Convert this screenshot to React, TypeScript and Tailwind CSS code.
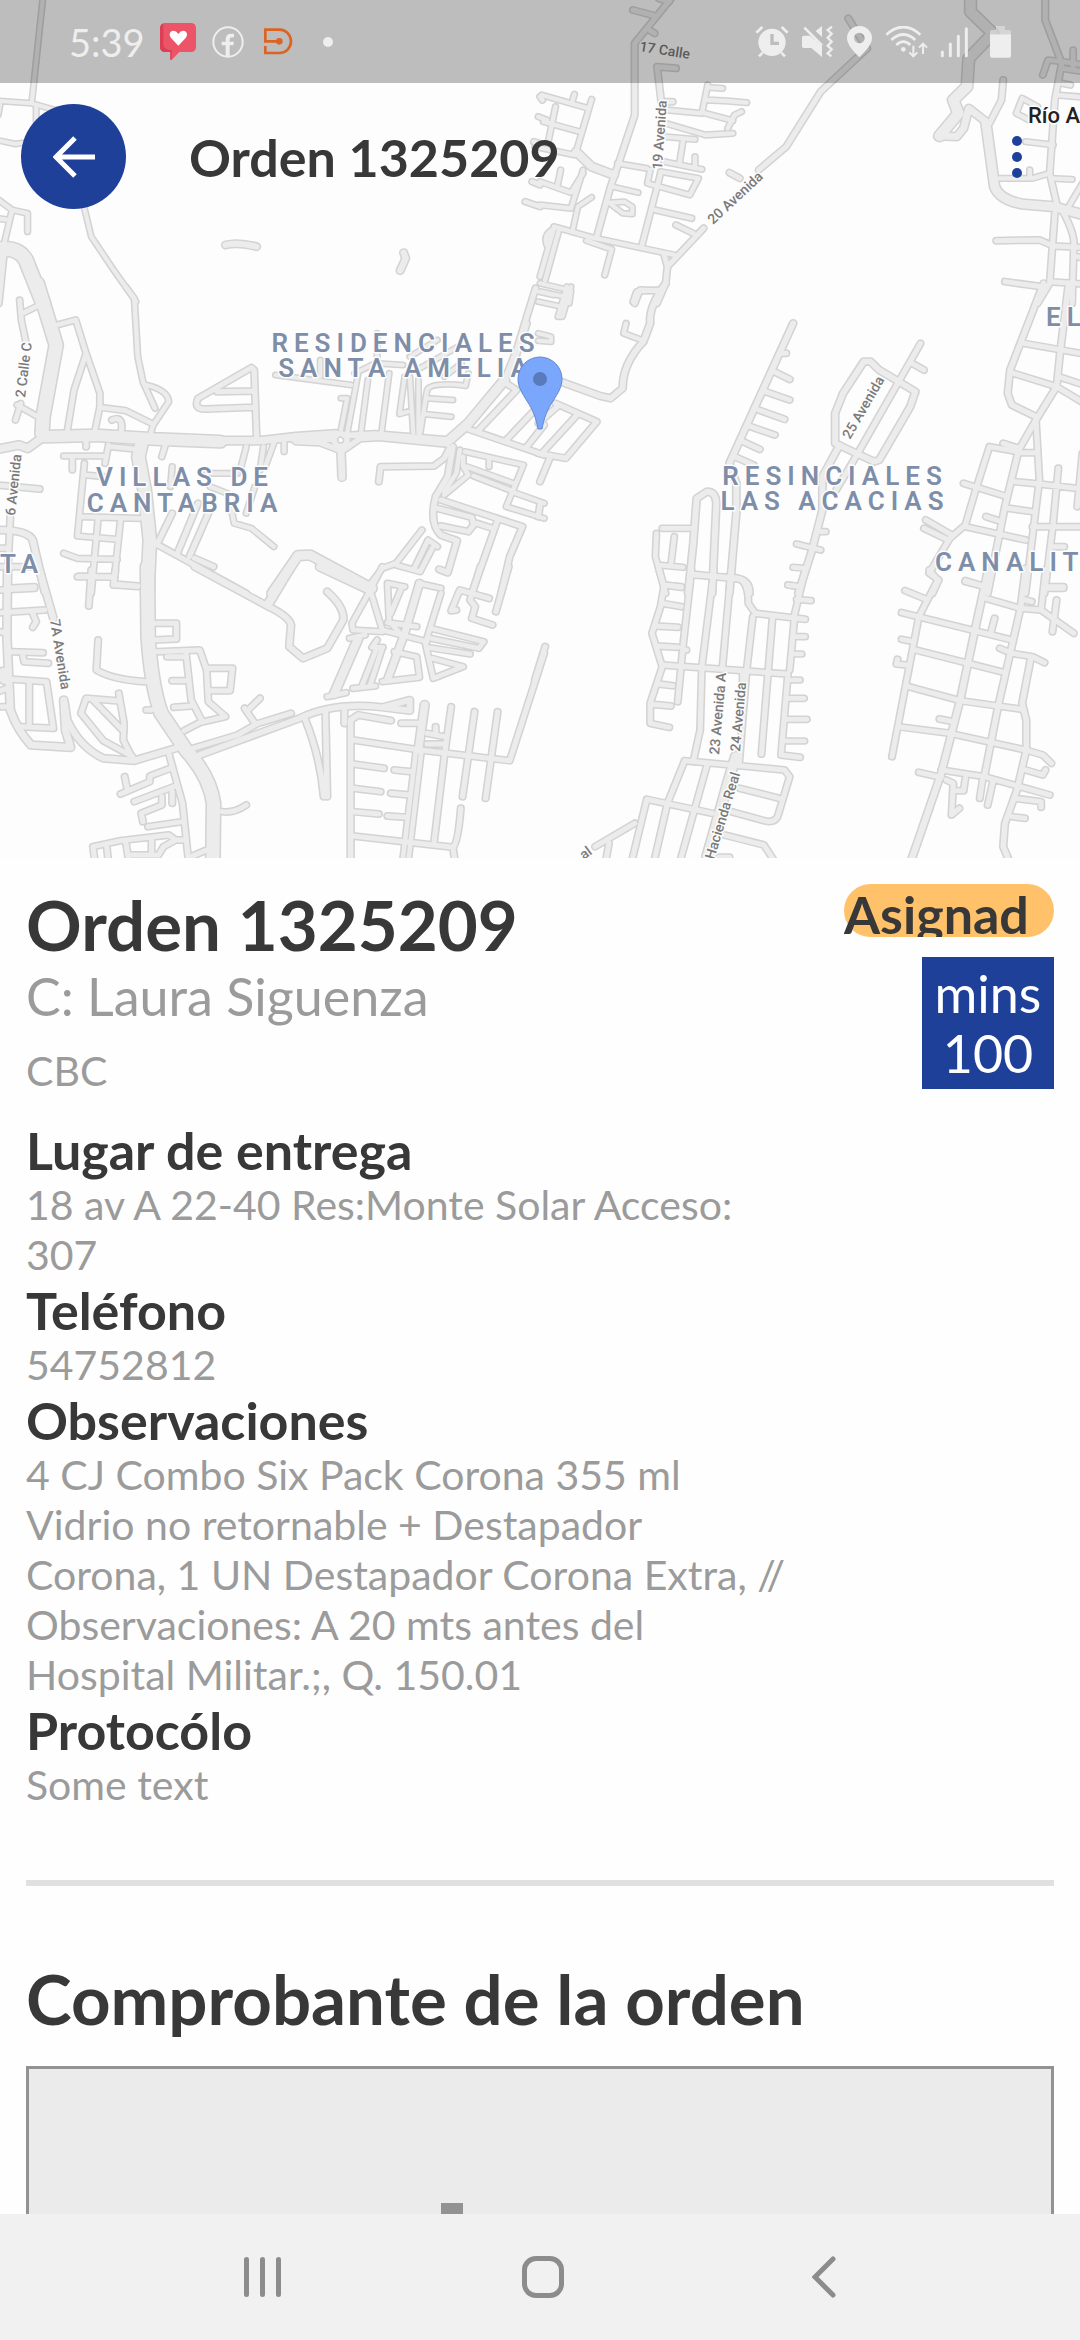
type Road = [width: number, d: string];
type Tile = { x: number; y: number; roads: Road[] };

const tiles: Tile[] = [
  {
    x: 0,
    y: 0,
    roads: [
      [12, 'M125 -10 L92 310 M-10 302 L92 310 L160 330 M105 322 V365 M0 315 L-5 345 M-10 420 L45 432 L70 428'],
      [13, 'M-10 595 L35 630 L80 640 V695 M-10 655 L25 660 M35 630 L10 740'],
      [12, 'M245 625 L265 710 L330 810 L395 905'],
      [40, 'M-20 750 Q50 735 75 780 L125 910'],
      [18, 'M-5 910 L10 760'],
      [18, 'M655 735 Q690 725 745 740 M1172 758 L1178 775 L1162 812'],
      [14, 'M1550 425 L1568 430 M1545 545 L1568 555 M1525 605 L1568 620 M1568 290 L1575 300'],
    ],
  },
  {
    x: 540,
    y: 0,
    roads: [
      [15, 'M385 -10 L330 60 L275 130 V345 L225 500 L205 560 L165 710'],
      [15, 'M270 30 L335 48 M345 -5 L375 5 M310 85 L333 100 M395 205 L340 200 L352 305 L385 305'],
      [13, 'M5 285 L140 325 M100 283 L92 310 M150 298 L105 455 M45 320 L25 420 M10 365 L115 395 M-15 440 L100 465 M-5 350 L20 360'],
      [22, 'M105 455 L150 500 L215 525'],
      [13, 'M125 510 L90 625 L0 615 M0 545 L90 578 L125 520 M60 510 L50 560'],
      [13, 'M225 490 L310 505 M320 510 L312 550 L435 585 L460 535 L350 515 M360 485 L470 508 M450 470 V500 M415 425 L405 490 M360 410 L450 418'],
      [13, 'M365 370 L480 405 L560 400 M545 385 L565 345 L585 335 M370 330 L470 340 L487 255 M487 262 L530 265 M487 300 L545 303 L600 308 M480 340 L560 362'],
      [14, 'M350 520 L295 740 M335 630 L440 655 M395 675 L445 700'],
      [12, 'M210 560 L285 578 M150 592 L110 620 L95 690 M200 608 L245 605 L268 620 V642 L240 640 L205 612'],
      [13, 'M40 680 L150 712 L390 765 M55 690 L15 840 M40 685 L0 830 M35 690 Q10 705 20 735 M135 722 L208 748 L188 825'],
      [12, 'M0 850 L90 872 L85 910 M5 875 L70 890'],
      [15, 'M895 55 L950 145 L815 275 L715 440 L635 510 M550 518 L580 535 M475 685 L370 800 L365 850 L340 910 M275 910 L290 870 L345 872 M360 762 L370 800'],
      [30, 'M1250 -10 V35 L1315 100 L1245 175 L1240 260 L1200 300 L1215 340 L1160 408'],
      [20, 'M1160 408 L1210 410 L1230 385 L1245 325 L1295 365'],
      [26, 'M1295 370 L1320 560 Q1335 600 1400 612 L1490 620 L1580 645'],
      [15, 'M1345 240 L1340 300 L1305 370 M1467 -5 V60 L1515 190 L1495 300 L1480 520 L1500 610'],
      [14, 'M1460 225 L1475 180 L1520 185 L1580 195 M1548 150 V200 M1515 205 L1580 215 M1515 250 L1540 255 M1500 285 L1580 292'],
      [13, 'M1400 295 L1383 340 L1420 360 M1400 295 L1445 320 M1410 425 L1490 435 M1335 535 H1430 L1480 520 M1422 510 V530 M1485 535 L1545 538 M1575 550 L1535 620'],
      [15, 'M1495 640 L1480 850 L1445 910 M1510 620 Q1555 700 1550 740 L1545 910 M1325 722 L1450 720 L1490 738 L1580 742 M1350 845 L1470 862 M1480 845 L1580 852 M1560 770 L1580 775'],
    ],
  },
  {
    x: 0,
    y: 290,
    roads: [
      [38, 'M108 -20 L163 165 L125 380 L122 430'],
      [34, 'M128 440 L280 436 L450 447 L640 455'],
      [22, 'M640 452 L760 452 L860 440 L975 432'],
      [16, 'M1000 436 L1090 432 L1300 450 M860 455 L930 458 L985 480 M1000 478 L1045 446 L1100 442 L1300 462 M850 448 H960'],
      [16, 'M970 450 a18 18 0 1 0 38 0 a18 18 0 1 0 -38 0'],
      [20, 'M990 480 L993 562'],
      [22, 'M120 445 L80 475 L55 465 L-10 478'],
      [36, 'M410 465 L402 500 L420 600 L435 750 L428 910'],
      [14, 'M57 30 L62 90 L75 155 M65 70 L105 50 M-5 -10 V40 M60 340 L45 390 M50 345 L110 380'],
      [14, 'M165 105 L220 90 L250 190 L290 310 V350 L275 425 M250 190 L215 300 L195 425 M290 352 L365 362 L440 400'],
      [13, 'M436 435 L445 405 L490 335 Q487 300 425 285'],
      [13, 'M365 -10 L390 25 L400 200 L415 275 L450 355'],
      [15, 'M352 425 Q360 375 325 390 M250 445 V470 M745 440 L738 240 L730 233 L575 325 Q560 360 600 357 L735 352 M630 305 L735 303'],
      [26, 'M1305 450 L1360 400 L1465 270'],
      [15, 'M1465 270 L1500 180 L1555 -5 M1485 240 L1530 100'],
      [12, 'M800 255 L1020 285 M990 325 H1008 L990 420 M1040 250 L1008 430 M1068 270 L1048 430 M1130 250 L1108 425 M1030 250 L1090 220 L1170 225 M1175 260 L1160 372 L1195 362 M1190 260 L1200 430 M1215 270 V430 M1220 430 L1240 300 Q1250 275 1352 287 L1360 250 M1240 325 L1315 330 M1230 372 L1310 380'],
      [12, 'M1095 130 V200 M1190 200 L1270 150 M1210 240 L1330 170 M930 210 V260 M1290 260 L1340 220'],
      [15, 'M1345 412 L1580 495 M1390 420 L1500 300 L1470 280 M1470 450 L1580 330 M1530 470 L1580 405'],
      [15, 'M1305 475 L1290 505 L1260 528 L1105 530 L1100 575'],
      [16, 'M1315 470 L1300 560 L1265 620 Q1245 700 1280 735 L1327 752 L1300 848 L1275 838'],
      [13, 'M1335 480 L1325 550 L1290 605 M1350 485 L1520 525 L1470 650 L1580 685 M1355 530 L1490 580 M1345 500 V530 L1360 555 L1290 615 M1420 505 V530 M1485 605 L1580 640 M1375 558 L1480 600'],
      [15, 'M1280 630 L1517 710 L1480 800 L1455 910 M1445 690 L1370 910 M1270 655 L1370 682 L1375 705 L1360 725 L1280 708 M1385 700 L1430 715'],
      [14, 'M1225 720 L1150 820 L1110 835 L1070 890 M1270 770 L1243 750 L1205 830 M1255 775 L1220 845 L1150 825'],
      [26, 'M790 910 L865 797 L900 795 L1080 895'],
      [18, 'M-5 720 Q80 720 95 750 L130 905'],
      [15, 'M30 680 L20 905 M-5 585 L115 597 M-5 775 H25 M0 830 H90 M20 895 L100 890'],
      [14, 'M185 498 H305 M210 500 V540 M315 465 L305 520 M320 470 L400 478 M480 465 L470 500 M245 520 L225 738 L340 748 M250 555 L300 560 M235 680 L405 685 M285 685 L265 910 M350 690 L330 885 L400 890 M185 790 L225 805 L340 808 M230 858 L330 862'],
      [15, 'M455 765 L500 670 M515 790 L575 640 M550 800 L605 670 M565 805 L620 830 M450 760 L715 910'],
      [13, 'M715 470 L700 530 M765 470 L755 540 M795 460 L770 530 M825 455 V485 M600 550 H690 M610 590 L660 610 M670 650 L680 700 L730 715 L795 770 M740 590 L715 670 M500 530 L495 590'],
    ],
  },
  {
    x: 540,
    y: 290,
    roads: [
      [12, 'M90 -10 L65 80 L52 80 L78 -10 M-5 35 L72 52 M-5 130 L32 140 V155 L-5 152 M-5 5 L40 15'],
      [17, 'M365 -20 Q315 50 320 100 L300 155 Q240 220 240 295 L205 325 L175 318 L60 275'],
      [13, 'M250 100 L243 130 L295 150 M270 35 L280 5 L345 0'],
      [15, 'M-5 490 L75 505 L165 395 L45 340 M-5 400 L50 350 M10 485 L110 372 M30 500 L0 575 M0 645 L-5 680'],
      [17, 'M735 100 L550 520 L570 580'],
      [15, 'M700 190 H715 M680 245 L725 268 M655 305 L725 330 M635 360 L710 388 M612 410 L682 435 M590 455 L638 478 M565 500 L620 525'],
      [17, 'M570 580 V670 L550 910'],
      [17, 'M500 910 L512 640 Q510 605 485 605 L455 625 L445 760 L430 910'],
      [14, 'M355 715 H445 M338 730 L335 800 L365 910 M390 740 L380 825 M345 825 L415 832 M435 855 L560 862 Q610 865 610 910 M360 885 L410 890'],
      [15, 'M1105 160 L920 495 L860 600 M1080 220 L1115 240'],
      [17, 'M985 240 L960 215 L940 215 L880 310 L857 370 V460 L970 515 L985 510 L1030 430 L1075 350 L1090 305 L985 240'],
      [17, 'M870 465 L820 560 V660 L790 780 L750 910'],
      [14, 'M815 725 H830 M745 762 L815 780 M735 832 L770 835 M720 885 L755 890'],
      [16, 'M1462 -20 L1365 240 L1358 310 L1370 345 L1440 380 M1535 -20 L1510 190 L1500 290 L1440 390 L1390 480 L1350 650 L1300 910'],
      [15, 'M1405 160 L1580 192 M1375 250 L1500 290 L1580 340 M1505 260 L1580 285 M1440 390 L1450 570 L1410 910'],
      [15, 'M1345 460 L1390 475 M1390 488 H1440 M1385 485 L1305 470 L1265 600 L1235 705 L1190 745 L1130 850 L1158 870 L1140 910'],
      [15, 'M1230 580 L1350 618 M1380 575 L1450 582 L1580 598 M1505 535 L1490 700 L1465 910 M1575 490 L1560 650 M1360 655 L1430 665 M1295 680 L1340 695 M1235 710 L1410 750 M1430 710 H1580 M1120 690 L1195 735 M1115 715 L1185 750 M1490 770 H1522 M1235 875 L1295 890 M1470 890 H1520'],
    ],
  },
  {
    x: 0,
    y: 570,
    roads: [
      [20, 'M22 -5 L20 200 L30 420 Q50 480 90 525 L205 532 L190 480 L185 390'],
      [34, 'M12 310 L15 325'],
      [18, 'M115 0 L155 145'],
      [15, 'M0 60 L100 55 M0 128 L130 120 M95 130 L105 155 L95 172 M-5 185 L20 188 M35 245 L125 248 M65 250 L70 275 L140 280 M35 328 L135 335 L155 475 L60 470 M85 335 V465 M-5 365 L20 355 M5 410 H25'],
      [18, 'M188 400 L195 450 Q230 530 300 565 L390 572 L510 535'],
      [15, 'M385 565 L358 510 L360 460 L345 370 M345 393 L250 385 L235 430 L300 512 L385 560 M270 390 L360 485 M285 210 L280 300 Q330 330 425 335'],
      [38, 'M428 -10 L430 200 Q440 350 468 430 L540 540 Q610 620 620 700 L618 880'],
      [15, 'M225 20 H330 L332 42 L400 48 M265 0 L258 108 M335 0 L330 45 M445 160 H512 V207 L445 210 M455 245 L580 240 L600 300 L605 395 L655 440 L580 458 L535 482 M600 295 H675 L668 362 H605 M540 250 L555 390 L585 450 M485 260 H530 M500 332 H545 M505 412 L555 408 M425 420 H440'],
      [17, 'M565 -10 L780 110 Q840 140 845 165 L840 230 L880 265 L950 235 L997 150 Q1000 110 950 65'],
      [24, 'M850 -20 L780 100 M930 -10 L1075 60'],
      [15, 'M560 535 L690 495 L745 462 L845 430 M740 460 L710 415 M720 420 L755 385'],
      [17, 'M580 555 L870 445 Q970 395 1110 412 L1190 390 V422 L1110 412'],
      [16, 'M885 445 Q930 560 940 680 M945 425 L950 680 M1000 410 V460 M1018 880 V450 L1040 435 L1135 452'],
      [15, 'M490 550 L530 700 L548 880 M495 595 L435 618 V635 L350 672 M362 620 L370 660 M505 650 L390 695 M500 665 V700 M470 680 V705 L410 730 L415 755 M430 770 L530 755 M275 870 L270 830 L350 812 L490 795 L510 810 H540 M310 830 L315 880 M365 815 L372 860 M380 855 H460 L475 830 L510 810 M440 805 V850 M555 860 L600 840 M645 725 Q680 730 715 705'],
      [14, 'M1110 -10 L1075 60 L1022 160 L1025 180 L1110 185 M1075 60 L1110 180 L1240 215'],
      [24, 'M1040 205 L970 372'],
      [14, 'M1015 205 L1060 195 M950 380 L1005 368 M1095 210 L1080 232 H1112 M1092 240 L1050 350 M1108 240 L1075 345 M1025 355 L1090 348'],
      [20, 'M1218 40 L1175 190 L1125 330'],
      [14, 'M1110 335 L1218 322 L1210 260 L1145 245 M1175 50 L1125 40 L1130 150 M1165 55 L1135 130 M1125 158 L1210 170 M1215 40 L1280 55 M1280 70 L1235 220 L1258 325 L1345 290 L1255 265 M1250 175 L1405 215 L1390 235 L1250 205 M1240 232 L1365 252 M1140 165 L1170 200'],
      [15, 'M1395 -10 L1365 90 L1380 110 L1370 145 L1430 165 M1477 -10 L1440 125 M1325 120 L1310 122 L1335 60 L1420 85'],
      [15, 'M1580 250 L1480 572 L1220 540 L1025 510'],
      [22, 'M1233 405 L1215 540'],
      [13, 'M1208 540 L1168 880 M1224 540 L1185 880'],
      [15, 'M1310 410 L1290 560 L1260 820 M1378 425 L1343 680 M1445 425 L1410 685 M1165 460 H1220 M1240 490 L1290 500 M1265 470 V490 M1240 522 H1290 M1025 582 L1115 595 M1145 600 L1195 605 M1025 655 L1105 665 M1135 670 L1190 675 M1025 725 L1100 732 M1125 738 L1180 742 M1025 798 L1315 832 Q1330 820 1338 715 M1315 832 L1322 880'],
    ],
  },
  {
    x: 540,
    y: 570,
    roads: [
      [15, 'M15 230 L-15 330 M345 -5 L360 50 L350 110 L325 190 L355 290 L320 400 V460 L375 472 M360 45 L410 52 M355 100 L410 110 M335 168 L400 172 M340 228 L400 232 M440 0 L415 230 L400 395 M415 240 H425 M345 342 L385 347 M325 403 L380 408'],
      [15, 'M355 285 L530 298 L720 312 M505 0 L470 290 L465 480 L445 575 M440 12 L580 28 Q605 40 605 100 L625 130 L770 148 M555 0 L530 290 M618 140 L600 300 L578 585 M675 145 L643 552 M770 0 L740 130 L725 300 M720 312 L700 555 L755 562'],
      [14, 'M720 45 L755 50 M745 88 L787 92 M740 200 H770 M738 252 H760 M728 330 H755 M720 385 H767 M715 448 H775 M710 513 H768 M588 305 V345'],
      [15, 'M420 572 L710 600 L725 620 L690 740 Q680 760 650 752 L555 725 M420 572 L370 700 L330 880 M485 585 L405 880 M310 688 L500 730 M310 688 L265 880 M275 760 L160 830 M200 820 L190 880 M580 655 L695 685 M535 795 L650 825 L685 880 M520 862 H550'],
      [26, 'M568 560 L545 640 L485 860'],
      [15, 'M1130 0 L1155 30 L1100 140 L1022 560 M1060 62 L1115 85 M1050 128 L1370 210 M1050 208 L1085 215 M1065 285 L1035 282 L1038 268 M1235 32 L1285 48'],
      [18, 'M1302 -5 L1265 170 L1220 390 L1165 610 L1075 880'],
      [16, 'M1410 -5 L1395 115 L1330 410 L1290 620 M1425 265 L1400 400 L1412 450 V540 L1385 660 L1350 760 L1345 830 L1365 880'],
      [15, 'M1295 85 L1395 115 L1455 120 L1550 190 M1410 90 L1428 95 M1468 0 L1455 120 M1470 55 H1520 M1500 90 L1488 185 M1320 145 L1310 185 M1090 240 L1350 308 M1335 235 L1370 250 L1430 260 L1465 278 M1070 350 L1220 392 L1400 418 M1160 447 L1200 455 M1040 470 L1190 490 L1410 540 L1460 555 L1485 580'],
      [15, 'M1100 607 L1165 622 M1165 600 L1290 620 L1480 675 M1410 600 L1460 615 L1468 600 M1380 685 L1455 695 V712 M1370 740 L1408 745 M1235 625 L1230 662 H1210 M1180 630 L1200 640 L1195 735 L1218 715 M1285 630 L1277 685 M1315 635 L1300 705'],
    ],
  },
];

const districts: { x: number; y: number; text: string; anchor?: 'start' | 'middle' | 'end' }[] = [
  { x: 406, y: 352, text: 'RESIDENCIALES' },
  { x: 406, y: 377, text: 'SANTA AMELIA' },
  { x: 185, y: 486, text: 'VILLAS DE' },
  { x: 185, y: 512, text: 'CANTABRIA' },
  { x: 835, y: 485, text: 'RESINCIALES' },
  { x: 835, y: 510, text: 'LAS ACACIAS' },
  { x: 44, y: 573, text: 'TA', anchor: 'end' },
  { x: 1046, y: 326, text: 'EL', anchor: 'start' },
  { x: 935, y: 571, text: 'CANALIT', anchor: 'start' },
];

const streets = [
  { x: 639, y: 51, angle: 9, text: '17 Calle' },
  { x: 662, y: 170, angle: -86, text: '19 Avenida' },
  { x: 713, y: 225, angle: -43, text: '20 Avenida' },
  { x: 25, y: 398, angle: -83, text: '2 Calle C' },
  { x: 15, y: 516, angle: -84, text: '6 Avenida' },
  { x: 850, y: 440, angle: -60, text: '25 Avenida' },
  { x: 50, y: 620, angle: 81, text: '7A Avenida' },
  { x: 719, y: 755, angle: -85, text: '23 Avenida A' },
  { x: 740, y: 752, angle: -85, text: '24 Avenida' },
  { x: 714, y: 860, angle: -73, text: 'Hacienda Real' },
  { x: 584, y: 860, angle: -37, text: 'al' },
];

function RoadLayer({ casing }: { casing: boolean }) {
  return (
    <g fill="none" stroke={casing ? '#d3d3d3' : '#ececec'} strokeLinecap="round" strokeLinejoin="round">
      {tiles.map((tile, i) => (
        <g key={i} transform={`translate(${tile.x} ${tile.y}) scale(0.3444 0.3333)`}>
          {tile.roads.map(([width, d], j) => (
            <path key={j} d={d} strokeWidth={casing ? width + 9 : width} />
          ))}
        </g>
      ))}
    </g>
  );
}

function OrderMap() {
  return (
    <svg
      viewBox="0 0 1080 858"
      className="block w-full bg-[#fdfdfd] font-[Roboto,sans-serif]"
      role="img"
      aria-label="Mapa de la entrega"
    >
      <RoadLayer casing />
      <RoadLayer casing={false} />
      <g stroke="#fdfdfd" strokeWidth="3" strokeLinejoin="round" paintOrder="stroke" fontWeight="500">
        {streets.map((s) => (
          <text key={s.text} fontSize="14" fill="#7a7a7a" transform={`translate(${s.x} ${s.y}) rotate(${s.angle})`}>
            {s.text}
          </text>
        ))}
        {districts.map((d) => (
          <text
            key={d.text}
            x={d.x}
            y={d.y}
            fontSize="26"
            fontWeight="600"
            letterSpacing="6"
            textAnchor={d.anchor ?? 'middle'}
            fill="#7e8ea9"
          >
            {d.text}
          </text>
        ))}
        <text x="1028" y="123" fontSize="22" fill="#222222">
          Río A
        </text>
      </g>
      <path
        d="M540 357 a22 22 0 0 1 22 22 c0 8 -4 14 -9 22 c-6 9 -9 17 -11 28 h-4 c-2 -11 -5 -19 -11 -28 c-5 -8 -9 -14 -9 -22 a22 22 0 0 1 22 -22 z"
        fill="#7aa7fc"
        stroke="#6288d0"
      />
      <circle cx="540" cy="379" r="7" fill="#5a7bbb" />
    </svg>
  );
}

function StatusBar() {
  return (
    <div className="flex h-[83px] items-center justify-between bg-black/25 pr-[68px] pl-[69px] text-[#eeeeee]">
      <div className="flex items-center">
        <span className="w-[91px] text-[38px] leading-[50px]">5:39</span>
        <svg viewBox="0 0 108 112" className="w-9">
          <path d="M16 0 H92 Q108 0 108 16 V72 Q108 87 92 87 H58 L34 112 Q31 112 31 108 V87 H16 Q0 87 0 72 V16 Q0 0 16 0 Z" fill="#ed5468" />
          <path d="M10 2 Q0 6 0 16 V72 Q0 87 16 87 H31 V108 Q31 112 34 112 L36 82 Q12 80 10 66 Z" fill="#da3f55" />
          <path d="M55 68 L33 45 Q24 33 34 25 Q46 20 55 33 Q64 20 76 25 Q86 33 77 45 Z" fill="#ffffff" />
        </svg>
        <svg viewBox="0 0 96 96" className="ml-4 w-8">
          <circle cx="48" cy="48" r="44" fill="none" stroke="currentColor" strokeWidth="6" />
          <path d="M41 92 V58 H29 V47 H41 V40 Q41 23 58 23 H66 V34 H60 Q53 34 53 41 V47 H66 L64 58 H53 V92 Z" fill="currentColor" />
        </svg>
        <svg viewBox="0 0 87 80" className="ml-5 w-[29px]" fill="none" stroke="#dc6420" strokeWidth="8">
          <path d="M45 40 H4 V5 H47 A34 35 0 0 1 47 75 H4 V54" />
          <circle cx="46" cy="40" r="6" fill="#dc6420" />
        </svg>
        <span className="ml-[30px] size-[10px] rounded-full bg-[#eeeeee]" />
      </div>
      <div className="flex items-center gap-3">
        <svg viewBox="15 45 102 96" className="h-8" fill="none" stroke="currentColor" strokeWidth="7">
          <path d="M19 65 L37 48 M95 48 L113 65 M38 125 L27 136 M94 125 L105 136" strokeWidth="8" />
          <circle cx="66" cy="94" r="41" fill="currentColor" stroke="none" />
          <path d="M66 69 V97 H87" stroke="#bdbdbd" strokeWidth="10" />
        </svg>
        <svg viewBox="150 45 99 96" className="h-8" fill="currentColor">
          <path d="M158 74 H177 L213 106 V138 L181 111 H158 Q153 111 153 106 V79 Q153 74 158 74 Z M194 60 L213 45 V78 Z" />
          <path d="M160 50 L213 103" stroke="currentColor" strokeWidth="8" />
          <path d="M243 47 L230 57 L242 68 L230 80 L242 92 L230 104 L242 115 L230 127 L241 136" fill="none" stroke="currentColor" strokeWidth="7" />
        </svg>
        <svg viewBox="291 45 81 96" className="h-8" fill="currentColor" fillRule="evenodd">
          <path d="M331 45 A37 37 0 0 1 369 82 C369 100 350 120 331 139 C312 120 294 100 294 82 A37 37 0 0 1 331 45 Z M331 65 A16 16 0 1 0 331 97 A16 16 0 1 0 331 65 Z" />
        </svg>
        <svg viewBox="411 45 129 96" className="h-8" fill="none" stroke="currentColor" strokeWidth="8">
          <path d="M415 71 Q466 25 517 71 M430 87 Q466 54 502 87 M445 102 Q466 82 487 102" />
          <circle cx="466" cy="115" r="7" fill="currentColor" stroke="none" />
          <path d="M496 104 V132 M484 124 L496 136 L508 124 M525 129 V100 M513 110 L525 98 L537 110" strokeWidth="6" />
        </svg>
        <svg viewBox="570 45 87 96" className="h-8" stroke="currentColor" strokeWidth="9" strokeLinecap="round">
          <path d="M577 123 V134 M601 99 V134 M625 76 V134 M649 53 V134" />
        </svg>
        <svg viewBox="717 45 69 96" className="ml-2 h-8" fill="currentColor">
          <path d="M738 57 V45 H765 V57 H778 Q783 57 783 62 V70 H720 V62 Q720 57 725 57 Z" opacity=".5" />
          <path d="M720 70 H783 V134 Q783 140 777 140 H726 Q720 140 720 134 Z" />
        </svg>
      </div>
    </div>
  );
}

function AppHeader() {
  return (
    <header className="absolute inset-x-0 top-0">
      <StatusBar />
      <div className="flex items-center justify-between pt-[21px] pr-[35px] pl-[21px]">
        <div className="flex items-center gap-[63px]">
          <button type="button" aria-label="Volver" className="grid size-[105px] place-items-center rounded-full bg-[#1f4099]">
            <svg viewBox="0 0 42 42" className="size-[42px]" fill="none" stroke="#ffffff" strokeWidth="5">
              <path d="M42 21 H4 M22 2 L3 21 L22 40" />
            </svg>
          </button>
          <h2 className="text-[52px] leading-[60px] font-bold">Orden 1325209</h2>
        </div>
        <button type="button" aria-label="Más opciones" className="flex flex-col items-center gap-[6px] px-[23px] py-4">
          <span className="size-[10px] rounded-full bg-[#1f4099]" />
          <span className="size-[10px] rounded-full bg-[#1f4099]" />
          <span className="size-[10px] rounded-full bg-[#1f4099]" />
        </button>
      </div>
    </header>
  );
}

const details = [
  { title: 'Lugar de entrega', text: '18 av A 22-40 Res:Monte Solar Acceso: 307' },
  { title: 'Teléfono', text: '54752812' },
  {
    title: 'Observaciones',
    text: '4 CJ Combo Six Pack Corona 355 ml Vidrio no retornable + Destapador Corona, 1 UN Destapador Corona Extra, // Observaciones: A 20 mts antes del Hospital Militar.;, Q. 150.01',
  },
  { title: 'Protocólo', text: 'Some text' },
];

export default function App() {
  return (
    <div className="flex h-screen flex-col bg-[#fefefe] font-[Lato,sans-serif] text-[#383838]">
      <main className="relative min-h-0 flex-1 overflow-y-auto [scrollbar-width:none]">
        <OrderMap />
        <AppHeader />

        <div className="px-[26px] pt-[26px] pb-10">
          <div className="flex items-start justify-between">
            <div>
              <h1 className="text-[69px] leading-[82px] font-bold">Orden 1325209</h1>
              <p className="text-[52px] leading-[60px] text-[#9b9b9b]">C: Laura Siguenza</p>
              <p className="mt-5 text-[41px] leading-[50px] text-[#9b9b9b]">CBC</p>
            </div>
            <div className="flex flex-col items-end gap-5">
              <div className="h-[53px] w-[210px] overflow-hidden">
                <div className="h-full rounded-full bg-[#ffc26b] text-[52px] leading-[60px] font-bold">Asignad</div>
              </div>
              <div className="size-[132px] bg-[#1f4099] py-[6px] text-center text-[52px] leading-[60px] text-white">
                <div>mins</div>
                <div>100</div>
              </div>
            </div>
          </div>

          <dl className="mt-6 max-w-[760px]">
            {details.map((item) => (
              <div key={item.title}>
                <dt className="text-[52px] leading-[60px] font-bold">{item.title}</dt>
                <dd className="text-[41px] leading-[50px] text-[#9b9b9b]">{item.text}</dd>
              </div>
            ))}
          </dl>

          <hr className="mt-[70px] border-t-[6px] border-[#e0e0e0]" />

          <h2 className="mt-[72px] text-[69px] leading-[82px] font-bold">Comprobante de la orden</h2>
          <button
            type="button"
            aria-label="Agregar foto del comprobante"
            className="mt-[26px] grid h-[516px] w-full place-items-center border-[3px] border-[#929292] bg-[#ebebeb]"
          >
            <svg viewBox="0 0 24 24" className="size-[264px]" fill="#929292">
              <path d="M3 4V1h2v3h3v2H5v3H3V6H0V4h3zm3 6V7h3V4h7l1.83 2H21c1.1 0 2 .9 2 2v12c0 1.1-.9 2-2 2H5c-1.1 0-2-.9-2-2V10h3zm7 9c2.76 0 5-2.24 5-5s-2.24-5-5-5-5 2.24-5 5 2.24 5 5 5zm-3.2-5c0 1.77 1.43 3.2 3.2 3.2s3.2-1.43 3.2-3.2-1.43-3.2-3.2-3.2-3.2 1.43-3.2 3.2z" />
            </svg>
          </button>
        </div>
      </main>

      <nav className="flex h-[126px] shrink-0 items-center justify-center bg-[#f1f1f1] pl-[6px] text-[#8c8c8c]">
        <button type="button" aria-label="Recientes" className="flex h-full w-[281px] items-center justify-center gap-[11px]">
          <span className="h-10 w-[5px] rounded-full bg-[#8c8c8c]" />
          <span className="h-10 w-[5px] rounded-full bg-[#8c8c8c]" />
          <span className="h-10 w-[5px] rounded-full bg-[#8c8c8c]" />
        </button>
        <button type="button" aria-label="Inicio" className="grid h-full w-[281px] place-items-center">
          <span className="size-[42px] rounded-[14px] border-[5px] border-[#8c8c8c]" />
        </button>
        <button type="button" aria-label="Atrás" className="grid h-full w-[281px] place-items-center">
          <svg viewBox="0 0 24 42" className="h-[42px]" fill="none" stroke="currentColor" strokeWidth="5" strokeLinecap="round">
            <path d="M21 3 L3 21 L21 39" />
          </svg>
        </button>
      </nav>
    </div>
  );
}
